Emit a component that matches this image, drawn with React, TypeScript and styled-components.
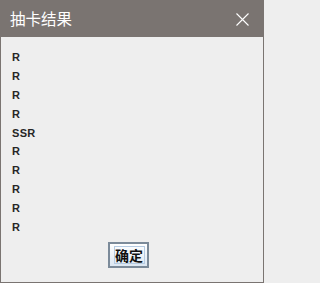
import React from "react";
import styled, { createGlobalStyle } from "styled-components";

const Global = createGlobalStyle`
  html, body { margin: 0; padding: 0; background: #eeeeee; }
  #root { width: 264px; height: 283px; }
`;

const Window = styled.div`
  width: 264px;
  height: 283px;
  box-sizing: border-box;
  border: 1px solid #7a7471;
  border-top: none;
  display: flex;
  flex-direction: column;
  background: #eeeeee;
`;

const TitleBar = styled.div`
  height: 37px;
  flex: none;
  margin: 0 -1px;
  background: #7a7471;
  display: flex;
  align-items: center;
  justify-content: space-between;
  padding: 0 15px 0 10px;
`;

const Title = styled.span`
  color: #ffffff;
  font-family: "Noto Sans CJK SC", sans-serif;
  font-size: 15.5px;
  line-height: 1;
  padding-top: 1px;
`;

const CloseIcon = styled.svg`
  width: 13px;
  height: 13px;
  display: block;
  margin-top: 1px;
`;

const Content = styled.div`
  flex: 1;
  display: flex;
  flex-direction: column;
  padding: 11px 10px 0 11px;
`;

const Line = styled.div`
  font-family: "Liberation Sans", Arial, sans-serif;
  font-weight: bold;
  font-size: 11px;
  letter-spacing: 0.3px;
  line-height: 18.9px;
  height: 18.9px;
  color: #262626;
`;

const ButtonRow = styled.div`
  display: flex;
  justify-content: center;
  margin-top: 5px;
  padding-right: 9px;
`;

const Button = styled.button`
  width: 41px;
  height: 26px;
  box-sizing: border-box;
  border: 2px solid #7b8a99;
  background: linear-gradient(#ffffff, #dce7f2);
  padding: 2px 2px 2px 4px;
  margin: 0;
  display: flex;
  align-items: stretch;
  justify-content: stretch;
  cursor: default;
`;

const Focus = styled.span`
  flex: 1;
  border: 1px solid #b5cbe2;
  display: flex;
  align-items: center;
  justify-content: center;
  font-family: "Noto Sans CJK SC", sans-serif;
  font-weight: bold;
  font-size: 14px;
  line-height: 1;
  color: #111111;
`;

const results = ["R", "R", "R", "R", "SSR", "R", "R", "R", "R", "R"];

export default function App() {
  return (
    <>
      <Global />
      <Window>
        <TitleBar>
          <Title>抽卡结果</Title>
          <CloseIcon viewBox="0 0 13 13">
            <path d="M0.5 0.5 L12.5 12.5 M12.5 0.5 L0.5 12.5" stroke="#ffffff" strokeWidth="1.1" fill="none" />
          </CloseIcon>
        </TitleBar>
        <Content>
          {results.map((r, i) => (
            <Line key={i}>{r}</Line>
          ))}
          <ButtonRow>
            <Button>
              <Focus>确定</Focus>
            </Button>
          </ButtonRow>
        </Content>
      </Window>
    </>
  );
}
